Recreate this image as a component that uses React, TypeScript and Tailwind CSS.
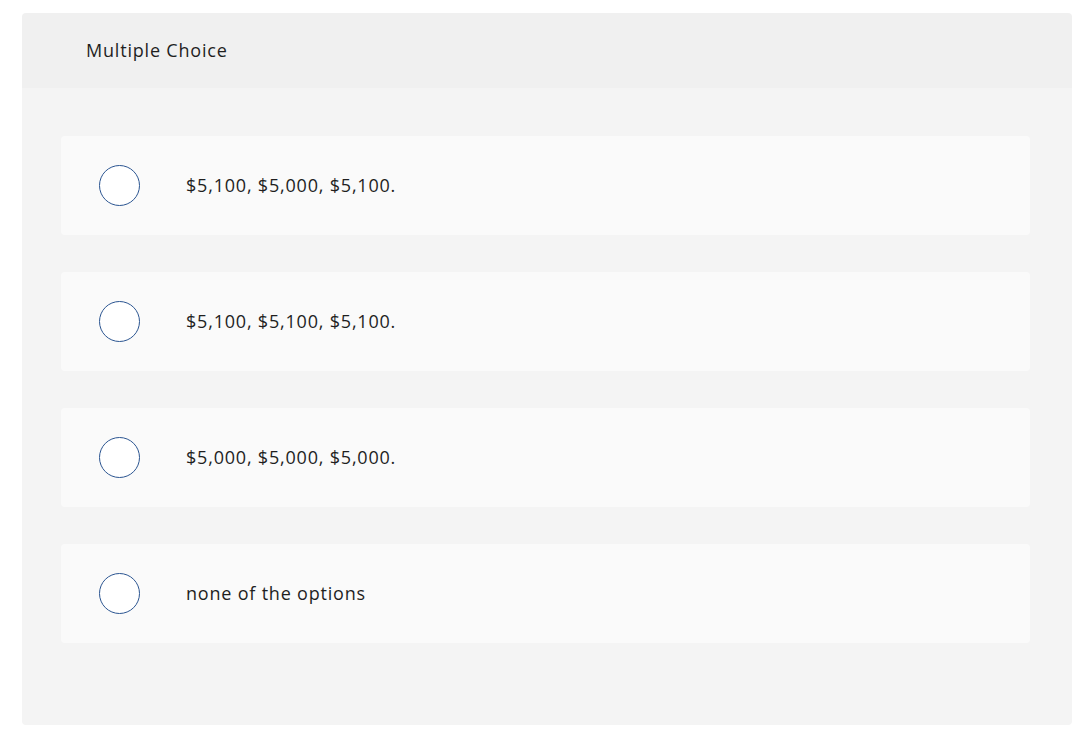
const options = [
  '$5,100, $5,000, $5,100.',
  '$5,100, $5,100, $5,100.',
  '$5,000, $5,000, $5,000.',
  'none of the options',
];

export default function App() {
  return (
    <div className="min-h-screen bg-white pt-[13px] pl-[22px] pr-[6px] font-['Open_Sans','Noto_Sans',sans-serif] text-[#1f1f1f] tracking-[0.8px]">
      <div className="w-[1050px] rounded-[4px] overflow-hidden">
        {/* header */}
        <div className="h-[75px] bg-[#f0f0f0] pl-[64px] flex items-center text-[18px]">
          Multiple Choice
        </div>
        {/* options */}
        <div className="bg-[#f4f4f4] pt-[48px] pb-[82px] px-[39px] flex flex-col gap-[37px]">
          {options.map((opt) => (
            <label
              key={opt}
              className="h-[99px] w-[969px] bg-[#fafafa] rounded-[4px] flex items-center pl-[38px] cursor-pointer"
            >
              <span className="w-[41px] h-[41px] rounded-full border border-[#2b5591] bg-white shrink-0" />
              <span className="ml-[46px] text-[18px]">{opt}</span>
            </label>
          ))}
        </div>
      </div>
    </div>
  );
}
